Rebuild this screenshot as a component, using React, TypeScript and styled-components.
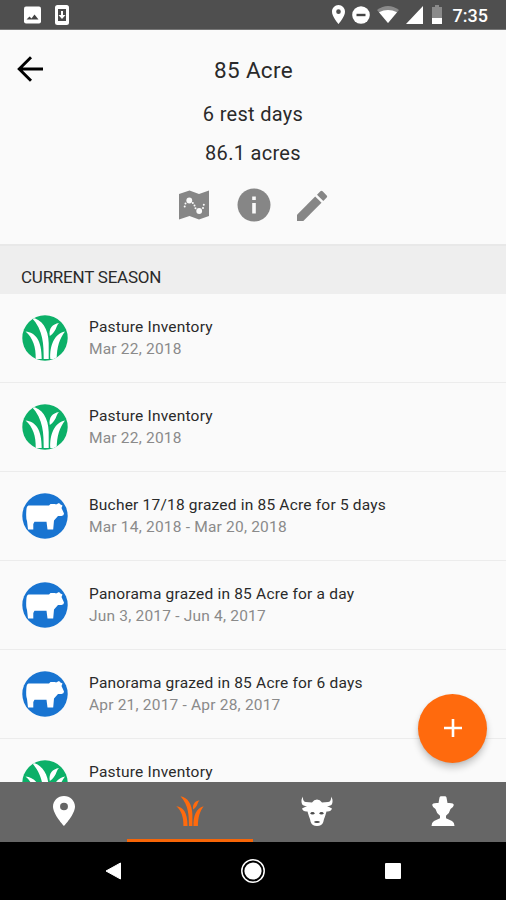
import React from "react";
import styled, { createGlobalStyle } from "styled-components";

const GlobalStyle = createGlobalStyle`
  *, *::before, *::after { box-sizing: border-box; }
  body { margin: 0; background: #fafafa; }
  svg { display: block; flex: none; }
`;

const Screen = styled.div`
  position: relative;
  width: 506px;
  height: 900px;
  display: flex;
  flex-direction: column;
  overflow: hidden;
  background: #fafafa;
  color: #2a2a2a;
  font-family: Roboto, "Liberation Sans", sans-serif;
`;

const StatusBar = styled.div`
  flex: none;
  height: 30px;
  padding: 0 18px 0 22px;
  display: flex;
  align-items: center;
  justify-content: space-between;
  background: #4f4f4f;
  border-bottom: 1px solid #777;
  color: #fff;
`;

const StatusGroup = styled.div<{ $gap: number }>`
  display: flex;
  align-items: center;
  gap: ${(p) => p.$gap}px;
`;

const Clock = styled.span`
  margin-left: 3px;
  font-size: 18px;
  line-height: 22px;
  font-weight: 500;
  padding-top: 2px;
`;

const Header = styled.header`
  flex: none;
  height: 214px;
  display: grid;
  grid-template-columns: 60px 1fr 60px;
  padding-top: 24px;
`;

const BackButton = styled.button`
  align-self: start;
  width: 60px;
  height: 30px;
  padding: 0;
  border: 0;
  background: none;
  display: flex;
  align-items: center;
  justify-content: center;
  color: #000;
`;

const Summary = styled.div`
  display: flex;
  flex-direction: column;
  align-items: center;
`;

const Title = styled.h1`
  margin: 0;
  padding: 0 0 15px 1px;
  font-size: 22.5px;
  line-height: 32px;
  font-weight: 400;
  letter-spacing: 0.3px;
`;

const Stat = styled.p`
  margin: 0 0 11px;
  font-size: 20px;
  line-height: 27.5px;
  letter-spacing: 0.3px;
`;

const Actions = styled.div`
  display: flex;
  align-items: center;
  justify-content: space-between;
  width: 150px;
  margin-top: 10px;
  color: #868686;
`;

const SectionHeader = styled.h2`
  flex: none;
  height: 49.5px;
  margin: 0;
  padding: 18px 21px 0;
  border-top: 2px solid #e8e8e8;
  background: #eee;
  font-size: 17px;
  line-height: 27px;
  font-weight: 400;
  letter-spacing: -0.23px;
`;

const List = styled.ul`
  flex: 1;
  min-height: 0;
  margin: 0;
  padding: 0;
  overflow: hidden;
  list-style: none;
`;

const Row = styled.li`
  height: 89px;
  padding: 0 21.5px;
  display: flex;
  align-items: center;
  gap: 21.5px;
  border-bottom: 1.5px solid #ececec;
`;

const RowText = styled.div`
  display: flex;
  flex-direction: column;
  min-height: 44px;
  font-size: 15.5px;
  line-height: 22px;
  letter-spacing: 0.2px;
  white-space: nowrap;
`;

const RowDate = styled.span`
  color: #8a8a8a;
`;

const Fab = styled.button`
  position: absolute;
  left: 418px;
  top: 693.5px;
  width: 69px;
  height: 69px;
  padding: 0;
  border: 0;
  border-radius: 50%;
  background: #ff6a0d;
  color: #fff;
  display: flex;
  align-items: center;
  justify-content: center;
  box-shadow: 0 5px 7px rgba(0, 0, 0, 0.2), 0 1px 3px rgba(0, 0, 0, 0.08);
`;

const TabBar = styled.nav`
  flex: none;
  height: 60px;
  display: grid;
  grid-template-columns: repeat(4, 1fr);
  background: #666;
`;

const Tab = styled.button<{ $active?: boolean }>`
  padding: 1px 0 0 1px;
  border: 0;
  border-bottom: 3px solid ${(p) => (p.$active ? "#f76507" : "transparent")};
  background: none;
  color: ${(p) => (p.$active ? "#ff6a0d" : "#fff")};
  display: flex;
  align-items: center;
  justify-content: center;
`;

const SystemNav = styled.div`
  flex: none;
  height: 58px;
  padding: 0 98px;
  display: flex;
  align-items: center;
  justify-content: space-between;
  background: #000;
  color: #fff;
`;

const PIN =
  "M12 2C8.13 2 5 5.13 5 9c0 5.25 7 13 7 13s7-7.75 7-13c0-3.87-3.13-7-7-7zm0 9.5a2.5 2.5 0 1 1 0-5 2.5 2.5 0 0 1 0 5z";

const PinIcon = ({ w, h }: { w: number; h: number }) => (
  <svg width={w} height={h} viewBox="5 2 14 20" preserveAspectRatio="none" fill="currentColor">
    <path d={PIN} />
  </svg>
);

const Blades = () => (
  <>
    <path d="M9.500 2.500C20 4 26.500 14 26.700 28V44H21.700C21.700 30 21.500 15 9.500 2.500Z" />
    <path d="M3.500 16.500C13.500 17.500 19.700 25 19.700 44H13.700C14 32 11 23 3.500 16.500Z" />
    <path d="M28.300 44C27.700 31 32 19 43 16.500C37.500 24 34.800 32 34.700 44Z" />
    <path d="M27.800 21C26.500 13.500 30.500 9 37 8C33.500 11.500 35 16 27.800 21Z" />
  </>
);

const GrassBadge = () => (
  <svg width="46" height="46" viewBox="0 0 46 46">
    <defs>
      <clipPath id="badge"><circle cx="23" cy="23" r="22.7" /></clipPath>
    </defs>
    <circle cx="23" cy="23" r="22.7" fill="#0cb068" />
    <g fill="#fff" clipPath="url(#badge)"><Blades /></g>
  </svg>
);

const CattleBadge = () => (
  <svg width="46" height="46" viewBox="0 0 46 46">
    <circle cx="23" cy="23" r="22.700" fill="#1874d1" />
    <path
      fill="#fff"
      d="M6.500 12.600H27L28.500 11H33L34 11.500L37 10L38.500 11.500L40.500 12.500L39.500 15L42 20.500Q42 22.700 39.500 23H36L32 27.500L31.200 36.500H25.500L24.500 28.700H12.500L11.300 31V36.500H6L5 28Q3.800 25.500 4.300 18Q4.500 13 6.500 12.600Z"
    />
  </svg>
);

const entries = [
  { kind: "grass", title: "Pasture Inventory", date: "Mar 22, 2018" },
  { kind: "grass", title: "Pasture Inventory", date: "Mar 22, 2018" },
  { kind: "cattle", title: "Bucher 17/18 grazed in 85 Acre for 5 days", date: "Mar 14, 2018 - Mar 20, 2018" },
  { kind: "cattle", title: "Panorama grazed in 85 Acre for a day", date: "Jun 3, 2017 - Jun 4, 2017" },
  { kind: "cattle", title: "Panorama grazed in 85 Acre for 6 days", date: "Apr 21, 2017 - Apr 28, 2017" },
  { kind: "grass", title: "Pasture Inventory" },
];

export default function App() {
  return (
    <Screen>
      <GlobalStyle />
      <StatusBar>
        <StatusGroup $gap={13}>
          <svg width="20" height="18" viewBox="0 0 20 18">
            <rect x="2" y="0.500" width="17" height="17" rx="2" fill="#fff" />
            <path d="M4.500 13.500L7.500 10.500L9.500 12.500L12.500 8.500L16.500 13.500Z" fill="#444" />
          </svg>
          <svg width="14" height="20" viewBox="0 0 14 20">
            <rect width="14" height="20" rx="2.500" fill="#fff" />
            <path d="M3 4H11V16H3Z" fill="#4a4a4a" />
            <path d="M6 6H8V10H10.500L7 14L3.500 10H6Z" fill="#fff" />
          </svg>
        </StatusGroup>
        <StatusGroup $gap={7}>
          <PinIcon w={13} h={19} />
          <svg width="18" height="18" viewBox="0 0 18 18">
            <circle cx="9" cy="9" r="8.800" fill="#fff" />
            <rect x="4.500" y="7.800" width="9" height="2.400" fill="#444" />
          </svg>
          <svg width="22" height="17" viewBox="0 0 22 17">
            <path d="M11 17L0 4Q11-4 22 4Z" fill="#8a8a8a" />
            <path d="M11 17L2 6.300Q11 1.500 20 6.300Z" fill="#fff" />
          </svg>
          <svg width="18" height="18" viewBox="0 0 18 18"><path d="M17 0V18H0Z" fill="#fff" /></svg>
          <svg width="12" height="19" viewBox="0 0 12 19">
            <path d="M1 2H4V0H8V2H11V19H1Z" fill="#8a8a8a" />
            <path d="M1 13H11V19H1Z" fill="#fff" />
          </svg>
          <Clock>7:35</Clock>
        </StatusGroup>
      </StatusBar>

      <Header>
        <BackButton aria-label="Back">
          <svg width="26" height="26" viewBox="0 0 26 26" fill="none" stroke="currentColor" strokeWidth="2.900">
            <path d="M26 13H2.500M14 1.200L2.200 13L14 24.800" />
          </svg>
        </BackButton>
        <Summary>
          <Title>85 Acre</Title>
          <Stat>6 rest days</Stat>
          <Stat>86.1 acres</Stat>
          <Actions>
            <svg width="32" height="30" viewBox="0 0 32 30">
              <path d="M1 4L11.500 0.500L21 4L31 0.500V26L21 29.500L11.500 26L1 29.500Z" fill="currentColor" />
              <g fill="#fafafa">
                <circle cx="11.300" cy="10.500" r="2.900" />
                <circle cx="21.200" cy="21" r="2.900" />
                <circle cx="7.500" cy="13.500" r="1" /><circle cx="6.700" cy="16.500" r="1" />
                <circle cx="14.800" cy="13" r="1" /><circle cx="16.500" cy="15.600" r="1" /><circle cx="17.500" cy="18.300" r="1" />
                <circle cx="25" cy="18" r="1" /><circle cx="25.800" cy="14.800" r="1" />
              </g>
            </svg>
            <svg width="34" height="34" viewBox="0 0 34 34">
              <circle cx="17" cy="17" r="16.500" fill="currentColor" />
              <path d="M15.200 8.500H18.800V12H15.200ZM15.200 15H18.800V25.500H15.200Z" fill="#fafafa" />
            </svg>
            <svg width="31" height="31" viewBox="0 0 31 31" fill="currentColor">
              <path d="M0 24.700L18.200 6.500L24.500 12.800L6.300 31H0Z" />
              <path d="M20 4.700L23.400 1.300Q24.500 0.200 25.600 1.300L29.700 5.400Q30.800 6.500 29.700 7.600L26.300 11Z" />
            </svg>
          </Actions>
        </Summary>
      </Header>

      <SectionHeader>CURRENT SEASON</SectionHeader>

      <List>
        {entries.map((e, i) => (
          <Row key={i}>
            {e.kind === "grass" ? <GrassBadge /> : <CattleBadge />}
            <RowText>
              <span>{e.title}</span>
              {e.date && <RowDate>{e.date}</RowDate>}
            </RowText>
          </Row>
        ))}
      </List>

      <Fab aria-label="Add">
        <svg width="18" height="18" viewBox="0 0 18 18"><path d="M9 0V18M0 9H18" stroke="currentColor" strokeWidth="2.600" /></svg>
      </Fab>

      <TabBar>
        <Tab aria-label="Places"><PinIcon w={22} h={30} /></Tab>
        <Tab $active aria-label="Pastures">
          <svg width="28" height="30" viewBox="3 2 40.500 42" preserveAspectRatio="none" fill="currentColor"><Blades /></svg>
        </Tab>
        <Tab aria-label="Herds">
          <svg width="32" height="30" viewBox="0 0 32 30">
            <path
              fill="#fff"
              d="M2 0.500Q1.500 5.500 5 6L11 6.500Q13 3.500 16 3.500T21 6.500L27 6Q30.500 5.500 30 0.500Q32.500 4 31 8Q30 10 26 10L31 12.500Q30 16 25.500 15.500L24 20.500Q22.800 23 22.300 26Q21 30 16 30T9.700 26Q9.200 23 8 20.500L6.500 15.500Q2 16 1 12.500L6 10Q2 10 1 8Q-0.500 4 2 0.500Z"
            />
            <g fill="#4c4c4c">
              <ellipse cx="11.500" cy="17.300" rx="2" ry="1.200" />
              <ellipse cx="20.500" cy="17.300" rx="2" ry="1.200" />
              <ellipse cx="16" cy="26" rx="2.900" ry="1.100" />
            </g>
          </svg>
        </Tab>
        <Tab aria-label="People">
          <svg width="24" height="30" viewBox="0 0 24 30" fill="currentColor">
            <path d="M7.500 7L8.500 1.500Q9 0 10.500 0.300H13.500Q15 0 15.500 1.500L16.500 7Q22.800 6.500 22.800 9Q22.500 11.500 19.500 13Q18.500 17.500 15 19.800V22.300L21 25Q23.500 26.500 23.500 30H0.500Q0.500 26.500 3 25L9 22.300V19.800Q5.500 17.500 4.500 13Q1.500 11.500 1.200 9Q1.200 6.500 7.500 7Z" />
          </svg>
        </Tab>
      </TabBar>

      <SystemNav>
        <svg width="30" height="18" viewBox="0 0 30 18"><path d="M8 9L22.500 1V17Z" fill="#fff" stroke="#fff" strokeLinejoin="round" /></svg>
        <svg width="26" height="26" viewBox="0 0 26 26">
          <circle cx="13" cy="13" r="11.200" fill="none" stroke="#fff" strokeWidth="1.500" />
          <circle cx="13" cy="13" r="8.600" fill="#fff" />
        </svg>
        <svg width="30" height="16" viewBox="0 0 30 16"><rect x="7" width="16" height="16" rx="1" fill="#fff" /></svg>
      </SystemNav>
    </Screen>
  );
}
